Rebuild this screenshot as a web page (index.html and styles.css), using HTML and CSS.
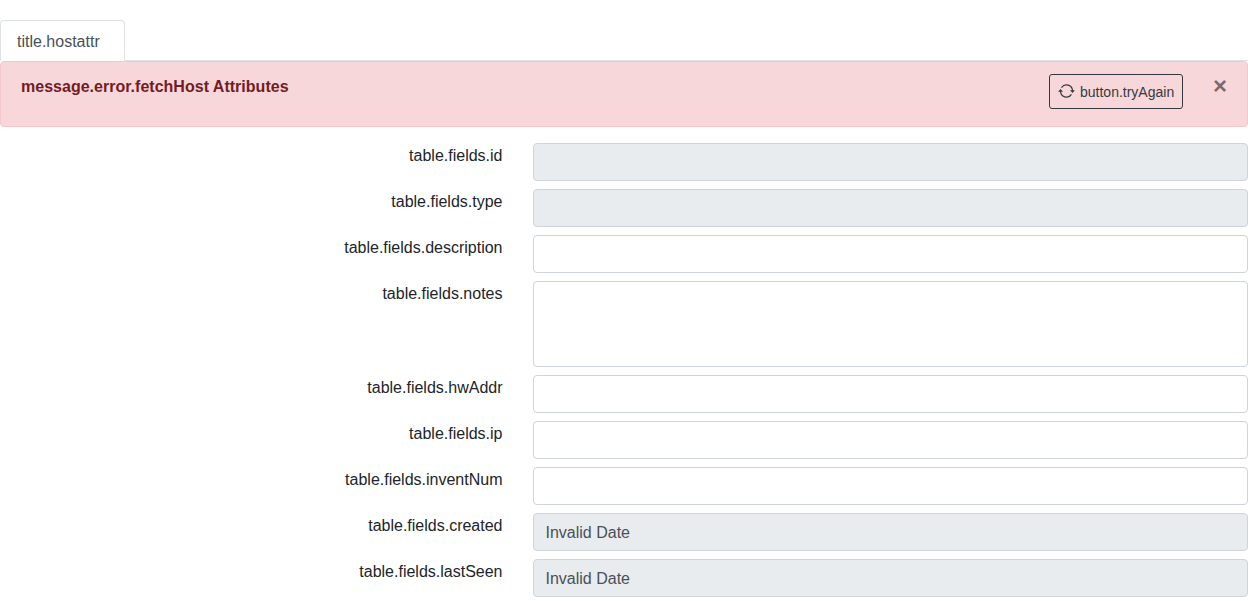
FILE: index.html
```html
<!DOCTYPE html>
<html lang="en">
<head>
<meta charset="utf-8">
<title>Host attributes</title>
<link rel="stylesheet" href="styles.css">
</head>
<body>
<ul class="tabs"><li><a class="tab">title.hostattr</a></li></ul>
<div class="alert">
  <strong class="message">message.error.fetchHost Attributes</strong>
  <button class="retry" type="button"><svg class="icon" viewBox="0 0 17 16" fill="none" stroke="currentColor" stroke-width="1.200"><path d="M3.500 4.600A6 6 0 0 1 14.500 8M13.500 11.400A6 6 0 0 1 2.500 8"/><path d="M.1 8.700 2.500 6.100 5 8.700zM12 7.300 14.500 9.900 16.900 7.300z" fill="currentColor" stroke="none"/></svg><span>button.tryAgain</span></button>
  <button class="close" type="button" aria-label="Close">×</button>
</div>
<form class="form">
  <div class="row"><label class="label" for="id">table.fields.id</label><input class="control" id="id" disabled></div>
  <div class="row"><label class="label" for="type">table.fields.type</label><input class="control" id="type" disabled></div>
  <div class="row"><label class="label" for="description">table.fields.description</label><input class="control" id="description"></div>
  <div class="row"><label class="label" for="notes">table.fields.notes</label><textarea class="control notes" id="notes"></textarea></div>
  <div class="row"><label class="label" for="hw">table.fields.hwAddr</label><input class="control" id="hw"></div>
  <div class="row"><label class="label" for="ip">table.fields.ip</label><input class="control" id="ip"></div>
  <div class="row"><label class="label" for="num">table.fields.inventNum</label><input class="control" id="num"></div>
  <div class="row"><label class="label" for="created">table.fields.created</label><input class="control" id="created" value="Invalid Date" disabled></div>
  <div class="row"><label class="label" for="seen">table.fields.lastSeen</label><input class="control" id="seen" value="Invalid Date" disabled></div>
</form>
</body>
</html>
```

FILE: styles.css
```css
*, *::before, *::after { box-sizing: border-box; }
body { margin: 0; padding-top: 20px; overflow: hidden; font: 16px/24px "Liberation Sans", Arial, sans-serif; color: #212529; background: #fff; }
.tabs { display: flex; height: 41px; list-style: none; margin: 0; padding: 0; border-bottom: 1px solid #dee2e6; }
.tab { display: block; width: 125px; height: 41px; padding: 9px 16px 6px; border: 1px solid #dee2e6; border-bottom-color: #fff; border-radius: 4px 4px 0 0; color: #495057; background: #fff; }
.alert { display: flex; align-items: flex-start; height: 66px; margin-bottom: 16px; padding: 12px 20px; border: 1px solid #f5c6cb; border-radius: 4px; background: #f8d7da; color: #721c24; }
.message { flex: 1; padding-top: 1px; letter-spacing: .015px; }
.retry { display: flex; align-items: flex-start; gap: 5px; height: 35px; width: 134px; padding: 7px 8px 5px; border: 1px solid #343a40; border-radius: 3px; background: transparent; color: #343a40; font: 14px/21px "Liberation Sans", Arial, sans-serif; white-space: nowrap; }
.icon { flex: none; width: 17px; height: 16px; margin-top: 1px; }
.close { width: 14px; height: 24px; margin-left: 30px; padding: 0; border: 0; background: transparent; color: #000; opacity: .5; font: 700 24px/24px "Liberation Sans", Arial, sans-serif; }
.form { display: flex; flex-direction: column; gap: 8px; }
.row { display: grid; grid-template-columns: 502.5px 715px; column-gap: 30.5px; align-items: start; }
.label { padding-top: 1px; text-align: right; }
.control { display: block; width: 100%; height: 38px; margin: 0; padding: 7px 12px 5px 11.5px; border: 1px solid #ced4da; border-radius: 4px; background: #fff; color: #495057; font: inherit; }
.control:disabled { background: #e9ecef; opacity: 1; }
.notes { height: 86px; resize: none; }
```
